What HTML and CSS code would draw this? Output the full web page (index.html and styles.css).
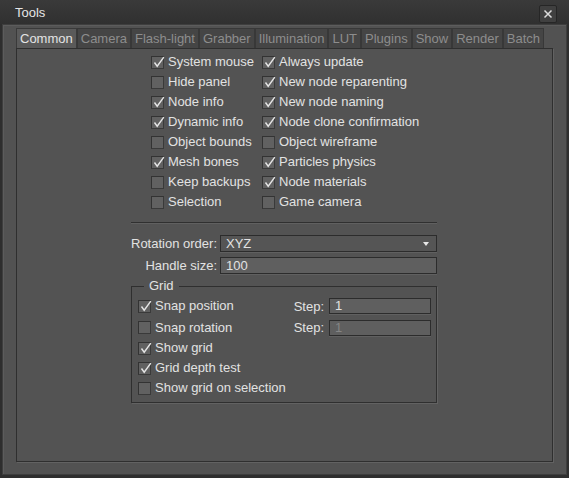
FILE: index.html
```html
<!DOCTYPE html>
<html>
<head>
<meta charset="utf-8">
<title>Tools</title>
<link rel="stylesheet" href="styles.css">
</head>
<body>
<div class="window">
  <div class="titlebar">
    <span class="title">Tools</span>
    <span class="close"><svg width="10" height="10" viewBox="0 0 10 10"><path d="M1.5 1.5L8.5 8.5M8.5 1.5L1.5 8.5" stroke="#dcdcdc" stroke-width="1.5"/></svg></span>
  </div>
  <div class="client">
    <div class="tabs">
      <div class="tab active">Common</div>
      <div class="tab">Camera</div>
      <div class="tab">Flash-light</div>
      <div class="tab">Grabber</div>
      <div class="tab">Illumination</div>
      <div class="tab">LUT</div>
      <div class="tab">Plugins</div>
      <div class="tab">Show</div>
      <div class="tab">Render</div>
      <div class="tab">Batch</div>
    </div>
    <div class="panel">
      <div class="content">
        <div class="checks">
          <label class="check"><span class="box"><svg viewBox="0 0 13 13"><path d="M2.5 6.5L5.2 10.2L11.8 1.2"/></svg></span>System mouse</label>
          <label class="check"><span class="box"><svg viewBox="0 0 13 13"><path d="M2.5 6.5L5.2 10.2L11.8 1.2"/></svg></span>Always update</label>
          <label class="check"><span class="box"></span>Hide panel</label>
          <label class="check"><span class="box"><svg viewBox="0 0 13 13"><path d="M2.5 6.5L5.2 10.2L11.8 1.2"/></svg></span>New node reparenting</label>
          <label class="check"><span class="box"><svg viewBox="0 0 13 13"><path d="M2.5 6.5L5.2 10.2L11.8 1.2"/></svg></span>Node info</label>
          <label class="check"><span class="box"><svg viewBox="0 0 13 13"><path d="M2.5 6.5L5.2 10.2L11.8 1.2"/></svg></span>New node naming</label>
          <label class="check"><span class="box"><svg viewBox="0 0 13 13"><path d="M2.5 6.5L5.2 10.2L11.8 1.2"/></svg></span>Dynamic info</label>
          <label class="check"><span class="box"><svg viewBox="0 0 13 13"><path d="M2.5 6.5L5.2 10.2L11.8 1.2"/></svg></span>Node clone confirmation</label>
          <label class="check"><span class="box"></span>Object bounds</label>
          <label class="check"><span class="box"></span>Object wireframe</label>
          <label class="check"><span class="box"><svg viewBox="0 0 13 13"><path d="M2.5 6.5L5.2 10.2L11.8 1.2"/></svg></span>Mesh bones</label>
          <label class="check"><span class="box"><svg viewBox="0 0 13 13"><path d="M2.5 6.5L5.2 10.2L11.8 1.2"/></svg></span>Particles physics</label>
          <label class="check"><span class="box"></span>Keep backups</label>
          <label class="check"><span class="box"><svg viewBox="0 0 13 13"><path d="M2.5 6.5L5.2 10.2L11.8 1.2"/></svg></span>Node materials</label>
          <label class="check"><span class="box"></span>Selection</label>
          <label class="check"><span class="box"></span>Game camera</label>
        </div>
        <div class="sep"></div>
        <div class="form">
          <span class="flabel">Rotation order:</span>
          <div class="combo"><span>XYZ</span><span class="arrow"></span></div>
          <span class="flabel">Handle size:</span>
          <div class="field">100</div>
        </div>
        <fieldset class="group">
          <legend>Grid</legend>
          <div class="grow r1">
            <label class="check"><span class="box"><svg viewBox="0 0 13 13"><path d="M2.5 6.5L5.2 10.2L11.8 1.2"/></svg></span>Snap position</label>
            <span class="step">Step:</span>
            <div class="field small">1</div>
          </div>
          <div class="grow r2">
            <label class="check"><span class="box"></span>Snap rotation</label>
            <span class="step">Step:</span>
            <div class="field small disabled">1</div>
          </div>
          <div class="grow">
            <label class="check"><span class="box"><svg viewBox="0 0 13 13"><path d="M2.5 6.5L5.2 10.2L11.8 1.2"/></svg></span>Show grid</label>
          </div>
          <div class="grow">
            <label class="check"><span class="box"><svg viewBox="0 0 13 13"><path d="M2.5 6.5L5.2 10.2L11.8 1.2"/></svg></span>Grid depth test</label>
          </div>
          <div class="grow">
            <label class="check"><span class="box"></span>Show grid on selection</label>
          </div>
        </fieldset>
      </div>
    </div>
  </div>
</div>
</body>
</html>
```
FILE: styles.css
```css
html, body {
  margin: 0;
  padding: 0;
  background: #2c2c2c;
}
body {
  font-family: "Liberation Sans", Arial, sans-serif;
  font-size: 13px;
  color: #e2e2e2;
}
.window {
  width: 569px;
  height: 478px;
  box-sizing: border-box;
  display: flex;
  flex-direction: column;
  background: #2e2e2e;
  padding: 0 2px 3px 2px;
}
.titlebar {
  height: 24px;
  flex: none;
  display: flex;
  align-items: center;
  justify-content: space-between;
  background: linear-gradient(#3a3a3a, #303030);
  margin: 0 -2px;
  padding: 0 12px 0 15px;
}
.title {
  color: #e6e6e6;
  line-height: 16px;
  padding-top: 2px;
}
.close {
  width: 18px;
  height: 18px;
  box-sizing: border-box;
  border: 1px solid #262626;
  border-radius: 2px;
  background: #404040;
  display: flex;
  align-items: center;
  justify-content: center;
  margin-top: 3px;
}
.client {
  flex: 1;
  display: flex;
  flex-direction: column;
  background: #525252;
  border: 1px solid #3e3e3e;
  box-shadow: inset 1px 1px 0 #5c5c5c;
  padding: 3px 13px 12px 13px;
}
.tabs {
  display: flex;
  height: 20px;
  flex: none;
}
.tab {
  flex: none;
  white-space: nowrap;
  height: 20px;
  box-sizing: border-box;
  padding: 0 3px;
  line-height: 19px;
  color: #8d8d8d;
  background: #454545;
  border: 1px solid #383838;
  border-bottom: none;
}
.tab.active {
  color: #e4e4e4;
  background: #5a5a5a;
  border-color: #3a3a3a;
}
.panel {
  flex: 1;
  background: #535353;
  border: 1px solid #2f2f2f;
  box-shadow: 1px 1px 0 #626262;
}
.content {
  width: 306px;
  margin-left: 114px;
  padding-top: 3px;
}
.checks {
  display: grid;
  grid-template-columns: 111px auto;
  grid-auto-rows: 20px;
  margin-left: 20px;
}
.check {
  display: flex;
  align-items: center;
  gap: 4px;
  white-space: nowrap;
  line-height: 20px;
}
.box {
  width: 13px;
  height: 13px;
  box-sizing: border-box;
  flex: none;
  background: #616161;
  border: 1px solid #3a3a3a;
  border-top-color: #333;
  border-left-color: #333;
  position: relative;
}
.box svg {
  position: absolute;
  left: 0;
  top: -1px;
  width: 13px;
  height: 13px;
  overflow: visible;
}
.box svg path {
  fill: none;
  stroke: #e6e6e6;
  stroke-width: 1.4;
}
.sep {
  margin-top: 10px;
  height: 1px;
  background: #303030;
  border-bottom: 1px solid #606060;
}
.form {
  display: grid;
  grid-template-columns: auto 1fr;
  column-gap: 3px;
  row-gap: 5px;
  margin-top: 11px;
}
.flabel {
  text-align: right;
  line-height: 17px;
}
.combo, .field {
  height: 17px;
  box-sizing: border-box;
  border: 1px solid #2c2c2c;
  box-shadow: 0 1px 0 #606060;
  line-height: 15px;
  padding: 0 5px;
}
.combo {
  background: #555555;
  display: flex;
  align-items: center;
  justify-content: space-between;
}
.arrow {
  width: 0;
  height: 0;
  border-left: 3px solid transparent;
  border-right: 3px solid transparent;
  border-top: 4px solid #e8e8e8;
  margin-right: 2px;
}
.field {
  background: #5f5f5f;
}
.group {
  margin: 4px 0 0 0;
  border: 1px solid #2f2f2f;
  box-shadow: 1px 1px 0 #626262;
  padding: 1px 5px 4px 6px;
}
.group legend {
  margin-left: 6px;
  padding: 0 5px;
  line-height: 16px;
}
.grow {
  display: flex;
  align-items: center;
  height: 20px;
}
.grow.r1 { height: 22px; }
.grow.r2 { height: 21px; }
.grow .check { flex: 1; }
.step {
  margin-right: 5px;
}
.field.small {
  width: 102px;
  height: 16px;
  line-height: 14px;
}
.field.disabled {
  color: #858585;
}
```
